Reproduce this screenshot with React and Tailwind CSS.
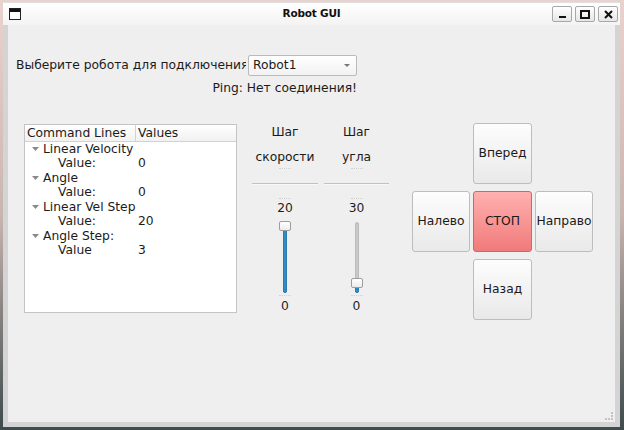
import React from 'react';

const font = { fontFamily: '"DejaVu Sans", "Liberation Sans", sans-serif' };

const treeRows = [
  { label: 'Linear Velocity', child: 'Value:', value: '0' },
  { label: 'Angle', child: 'Value:', value: '0' },
  { label: 'Linear Vel Step', child: 'Value:', value: '20' },
  { label: 'Angle Step:', child: 'Value', value: '3' },
];

function Caret() {
  return (
    <svg width="7" height="4" viewBox="0 0 7 4" className="block">
      <polygon points="0,0 7,0 3.5,4" fill="#8a8a8a" />
    </svg>
  );
}

function Tick({ className = '' }) {
  return <div className={`h-px w-[12px] border-t border-dotted border-[#d0d0d0] ${className}`} />;
}

// vertical slider, handle position computed from the value
function VSlider({ value, max }) {
  const handleTop = Math.round((1 - value / max) * 63);
  return (
    <div className="relative h-[73px] w-[12px]">
      <div className="absolute left-[4px] top-[1px] bottom-[1px] w-[4px] rounded-sm bg-[#c9c9c9] border border-[#bcbcbc]" />
      <div
        className="absolute left-[4px] bottom-[1px] w-[4px] rounded-sm bg-[#308cc6] border border-[#2a78ad]"
        style={{ top: handleTop + 8 }}
      />
      <div
        className="absolute left-0 h-[10px] w-[12px] rounded-[2px] border border-[#9e9e9e] bg-gradient-to-b from-white to-[#ececec]"
        style={{ top: handleTop }}
      />
    </div>
  );
}

function SliderColumn({ top, bottom, value, max, width }) {
  return (
    <div className={`flex flex-col items-center ${width}`}>
      <div className="h-[16px] leading-[16px]">{top}</div>
      <div className="mt-[9px] h-[16px] leading-[16px]">{bottom}</div>
      <Tick className="mt-[3px]" />
      <div className="mt-[14px] w-full h-px bg-[#c2c2c2]" />
      <div className="w-full h-px bg-[#f8f8f8]" />
      <Tick className="mt-[13px]" />
      <div className="mt-px h-[16px] leading-[16px]">{max}</div>
      <div className="mt-[5px]">
        <VSlider value={value} max={max} />
      </div>
      <Tick className="mt-px" />
      <div className="mt-[2px] h-[16px] leading-[16px]">0</div>
    </div>
  );
}

function PadButton({ children, stop }) {
  return (
    <div
      className={
        stop
          ? 'flex items-center justify-center rounded-[3px] border border-[#c46a6a] bg-gradient-to-b from-[#ffb0b0] to-[#f07a7a] text-[#1a1a1a]'
          : 'flex items-center justify-center rounded-[3px] border border-[#bdbdbd] bg-gradient-to-b from-[#fdfdfd] to-[#e9e9e9] text-[#1a1a1a]'
      }
    >
      {children}
    </div>
  );
}

export default function App() {
  return (
    <div
      className="w-[624px] h-[430px] overflow-hidden pl-[3px] pt-[2px] bg-gradient-to-b from-[#ead3cf] via-[#c9b5b0] to-[#3f4b4d]"
      style={font}
    >
      <div className="w-[617px] h-[425px] flex flex-col">
        {/* Title bar */}
        <div className="h-[23px] flex items-center bg-gradient-to-b from-white to-[#f3f3f3] border-t border-[#e0e0e0]">
          <div className="w-[68px] pl-[6px]">
            <div className="w-[12px] h-[12px] border border-[#222] bg-white">
              <div className="h-[3px] bg-[#111]" />
            </div>
          </div>
          <div className="flex-1 text-center text-[10.5px] font-bold text-[#111] tracking-[-0.2px]">Robot GUI</div>
          <div className="w-[68px] flex gap-[3px] pr-[2px]">
            <div className="w-[20px] h-[16px] border border-[#a8a8a8] rounded-[2px] bg-gradient-to-b from-white to-[#e6e6e6] flex items-end justify-center pb-[3px]">
              <div className="w-[7px] h-[2px] bg-[#111]" />
            </div>
            <div className="w-[20px] h-[16px] border border-[#a8a8a8] rounded-[2px] bg-gradient-to-b from-white to-[#e6e6e6] flex items-center justify-center">
              <div className="w-[10px] h-[9px] border-2 border-[#111]" />
            </div>
            <div className="w-[20px] h-[16px] border border-[#a8a8a8] rounded-[2px] bg-gradient-to-b from-white to-[#e6e6e6] flex items-center justify-center">
              <svg width="9" height="9" viewBox="0 0 9 9">
                <path d="M1 1 L8 8 M8 1 L1 8" stroke="#111" strokeWidth="2" />
              </svg>
            </div>
          </div>
        </div>

        {/* Window body */}
        <div className="flex-1 border-x-[5px] border-b-[5px] border-[#d4d4d4] bg-[#efefef] pl-[8px] text-[12.3px] text-[#1b1b1b] relative">
          <div className="mt-[30px] flex items-center h-[21px]">
            <div className="w-[230px] mr-[2px] overflow-hidden whitespace-nowrap">Выберите робота для подключения</div>
            <div className="w-[109px] h-[21px] rounded-[2px] border border-[#bababa] bg-gradient-to-b from-white to-[#f2f2f2] flex items-center pl-[4px] pr-[6px]">
              <span className="flex-1">Robot1</span>
              <svg width="6" height="3" viewBox="0 0 6 3">
                <polygon points="0,0 6,0 3,3" fill="#777" />
              </svg>
            </div>
          </div>
          <div className="mt-[4px] h-[16px] leading-[16px] w-[341px] text-right">Ping: Нет соединения!</div>

          <div className="mt-[28px] flex items-start">
            {/* Tree */}
            <div className="ml-[8px] w-[213px] h-[189px] border border-[#c4c4c4] bg-white">
              <div className="flex h-[17px] border-b border-[#d2d2d2] bg-gradient-to-b from-white to-[#f1f1f1] leading-[16px]">
                <div className="w-[111px] pl-[2px] border-r border-[#d2d2d2]">Command Lines</div>
                <div className="pl-[2px]">Values</div>
              </div>
              {treeRows.map((r) => (
                <div key={r.label}>
                  <div className="flex items-center h-[14.43px]">
                    <div className="w-[18px] flex justify-end pr-[4px]">
                      <Caret />
                    </div>
                    <span>{r.label}</span>
                  </div>
                  <div className="flex items-center h-[14.43px]">
                    <div className="w-[113px] pl-[33px]">{r.child}</div>
                    <div>{r.value}</div>
                  </div>
                </div>
              ))}
            </div>

            {/* Sliders */}
            <div className="ml-[15px] flex gap-[6px]">
              <SliderColumn top="Шаг" bottom="скорости" value={20} max={20} width="w-[66px]" />
              <SliderColumn top="Шаг" bottom="угла" value={3} max={30} width="w-[65px]" />
            </div>

            {/* Direction pad */}
            <div className="ml-[23px] -mt-px grid grid-cols-[58px_59px_58px] grid-rows-[61px_61px_61px] gap-x-[3px] gap-y-[7px]">
              <div />
              <PadButton>Вперед</PadButton>
              <div />
              <PadButton>Налево</PadButton>
              <PadButton stop>СТОП</PadButton>
              <PadButton>Направо</PadButton>
              <div />
              <PadButton>Назад</PadButton>
              <div />
            </div>
          </div>

          {/* resize grip */}
          <div className="absolute right-[2px] bottom-[2px] w-[8px] h-[8px] border-r-2 border-b-2 border-dotted border-[#c4c4c4]" />
        </div>
      </div>
    </div>
  );
}
